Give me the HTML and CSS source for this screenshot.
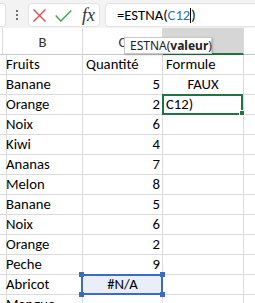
FILE: index.html
```html
<!DOCTYPE html>
<html lang="fr">
<head>
<meta charset="utf-8">
<link rel="stylesheet" href="styles.css">
</head>
<body>
<div class="bar">
  <div class="namebox"></div>
  <div class="dots"><span></span><span></span><span></span></div>
  <div class="btnbox">
    <svg class="ico-x" width="13" height="13" viewBox="0 0 13 13"><path d="M0.5 0.5 L12.5 12.5 M12.5 0.5 L0.5 12.5" stroke="#e5484d" stroke-width="1.4" fill="none"/></svg>
    <svg class="ico-ok" width="17" height="12" viewBox="0 0 17 12"><path d="M0.7 5.6 L5.8 10.9 L16.3 0.6" stroke="#3fa34d" stroke-width="1.4" fill="none"/></svg>
    <span class="fx">fx</span>
  </div>
  <div class="formula"><span>=ESTNA(</span><span class="ref">C12</span><span class="caret"></span><span>)</span></div>
</div>
<div class="sheet">
  <div class="h"></div><div class="h">B</div><div class="h">C</div><div class="h hsel"></div><div class="h last"></div>

  <div class="c"></div><div class="c">Fruits</div><div class="c">Quantité</div><div class="c">Formule</div><div class="c last"></div>
  <div class="c"></div><div class="c">Banane</div><div class="c n">5</div><div class="c ctr">FAUX</div><div class="c last"></div>
  <div class="c"></div><div class="c">Orange</div><div class="c n">2</div><div class="c active">C12)</div><div class="c last"></div>
  <div class="c"></div><div class="c">Noix</div><div class="c n">6</div><div class="c"></div><div class="c last"></div>
  <div class="c"></div><div class="c">Kiwi</div><div class="c n">4</div><div class="c"></div><div class="c last"></div>
  <div class="c"></div><div class="c">Ananas</div><div class="c n">7</div><div class="c"></div><div class="c last"></div>
  <div class="c"></div><div class="c">Melon</div><div class="c n">8</div><div class="c"></div><div class="c last"></div>
  <div class="c"></div><div class="c">Banane</div><div class="c n">5</div><div class="c"></div><div class="c last"></div>
  <div class="c"></div><div class="c">Noix</div><div class="c n">6</div><div class="c"></div><div class="c last"></div>
  <div class="c"></div><div class="c">Orange</div><div class="c n">2</div><div class="c"></div><div class="c last"></div>
  <div class="c"></div><div class="c">Peche</div><div class="c n">9</div><div class="c"></div><div class="c last"></div>
  <div class="c"></div><div class="c">Abricot</div><div class="c ctr refcell">#N/A<i class="hd tl"></i><i class="hd tr"></i><i class="hd bl"></i><i class="hd br"></i></div><div class="c"></div><div class="c last"></div>
  <div class="c"></div><div class="c">Mangue</div><div class="c"></div><div class="c"></div><div class="c last"></div>

  <div class="tip">ESTNA(<b>valeur</b>)</div>
</div>
</body>
</html>
```
FILE: styles.css
```css
html, body {
  margin: 0;
  padding: 0;
}
body {
  width: 255px;
  height: 303px;
  overflow: hidden;
  background: #ffffff;
  font-family: Carlito, Calibri, Lato, "Liberation Sans", sans-serif;
  color: #000;
}
.bar {
  height: 28px;
  background: #f3f3f3;
  display: flex;
  align-items: stretch;
  padding-top: 3px;
  padding-bottom: 1px;
  box-sizing: border-box;
}
.namebox {
  width: 6px;
  background: #fff;
  border: 1px solid #e0e0e0;
  border-left: none;
  border-radius: 0 4px 4px 0;
  box-sizing: border-box;
}
.dots {
  width: 22px;
  display: flex;
  flex-direction: column;
  align-items: center;
  justify-content: center;
  gap: 2px;
}
.dots span {
  width: 2px;
  height: 2px;
  background: #444;
  border-radius: 1px;
}
.btnbox {
  width: 72px;
  background: #fff;
  border: 1px solid #e3e3e3;
  border-radius: 4px;
  box-sizing: border-box;
  display: flex;
  align-items: center;
  padding-left: 4px;
}
.ico-x { margin-top: 1px; }
.ico-ok { margin-left: 9px; margin-top: 1px; }
.fx {
  margin-left: 10px;
  font-family: "Liberation Serif", "DejaVu Serif", serif;
  font-style: italic;
  font-size: 18px;
  color: #333;
  line-height: 1;
}
.formula {
  flex: 1;
  margin-left: 5px;
  margin-right: -6px;
  background: #fff;
  border: 1px solid #e3e3e3;
  border-radius: 4px;
  box-sizing: border-box;
  padding-left: 11px;
  display: flex;
  align-items: center;
  font-size: 14.7px;
  white-space: nowrap;
}
.ref { color: #2f6fb8; }
.caret {
  display: inline-block;
  width: 1px;
  height: 15px;
  background: #000;
}
.sheet {
  position: relative;
  display: grid;
  grid-template-columns: 3px 80px 80px 81px 1fr;
  grid-template-rows: 27px;
  grid-auto-rows: 20px;
  font-size: 14.7px;
}
.h {
  border-right: 1px solid #dadada;
  border-bottom: 1px solid #c6c6c6;
  display: flex;
  align-items: center;
  justify-content: center;
  font-size: 14.7px;
  color: #333;
  padding-top: 1px;
  box-sizing: border-box;
}
.hsel {
  background: #d6d6d6;
  border-bottom: 2px solid #217346;
}
.c {
  border-right: 1px solid #dadada;
  border-bottom: 1px solid #dadada;
  box-sizing: border-box;
  padding: 0 3px;
  line-height: 19px;
  white-space: nowrap;
  overflow: visible;
  position: relative;
}
.last { border-right: none; }
.n { text-align: right; padding-right: 2px; }
.ctr { text-align: center; }
.active::after {
  content: "";
  position: absolute;
  top: -1px;
  left: -1px;
  right: 0;
  bottom: -1px;
  border: 2px solid #217346;
}
.active::before {
  content: "";
  position: absolute;
  right: -2px;
  bottom: -2px;
  width: 4px;
  height: 4px;
  background: #217346;
  border: 1px solid #fff;
  z-index: 2;
}
.refcell {
  background: #e9eef8;
}
.refcell::after {
  content: "";
  position: absolute;
  top: -1px;
  left: -2px;
  right: -1px;
  bottom: -1px;
  border: 2px solid #3a6cc4;
}
.hd {
  position: absolute;
  width: 5px;
  height: 5px;
  background: #3a6cc4;
  z-index: 2;
}
.tl { top: -3px; left: -4px; }
.tr { top: -3px; right: -3px; }
.bl { bottom: -3px; left: -4px; }
.br { bottom: -3px; right: -3px; }
.tip {
  position: absolute;
  left: 124px;
  top: 9px;
  width: 88px;
  height: 17px;
  box-sizing: border-box;
  background: #fff;
  border: 1px solid #c8c8c8;
  box-shadow: 1px 1px 2px rgba(0,0,0,0.2);
  font-family: "Noto Sans", "Open Sans", sans-serif;
  font-size: 12px;
  line-height: 15px;
  padding-left: 5px;
  color: #222;
  white-space: nowrap;
}
.tip b { font-weight: 700; }
```
